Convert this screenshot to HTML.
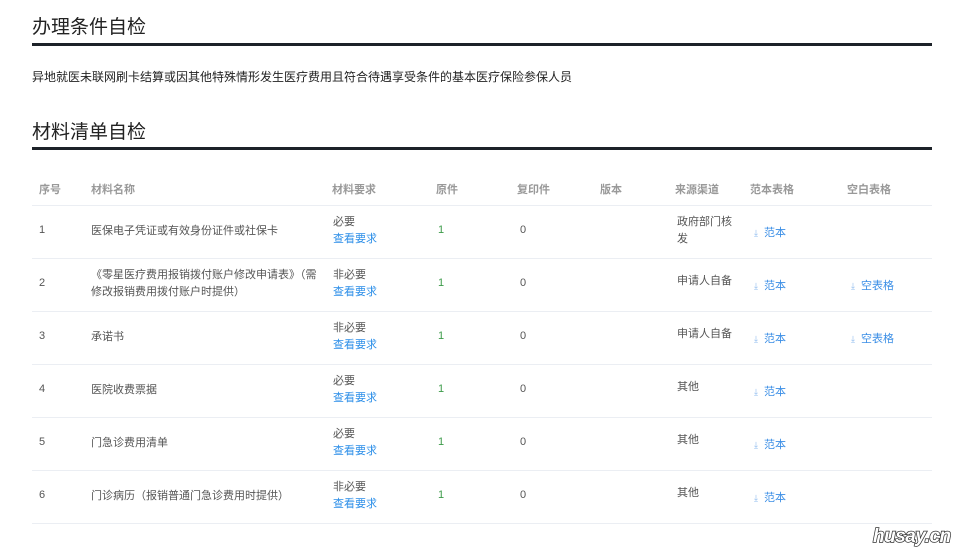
<!DOCTYPE html>
<html><head><meta charset="utf-8"><style>
body{margin:0;width:966px;height:554px;background:#fff;font-family:"Liberation Sans","Noto Sans CJK SC",sans-serif;position:relative;overflow:hidden;color:#333}
.a{position:absolute;white-space:nowrap}
.h{font-size:19px;color:#222}
.bar{position:absolute;left:32px;width:900px;height:3px;background:#1d2229}
.th{font-size:11px;color:#999;font-weight:bold}
.row{position:absolute;left:32px;width:900px;height:1px;background:#ebeef3}
.t{font-size:11px;color:#555}
.b{color:#2b8ee8}
.g{color:#3d9b4a}
.d{font-size:11px;color:#3a8ee6}
.d i{font-style:normal;font-size:9px;color:#8ab8ee;margin-right:6px}
</style></head><body>
<div class="a h" style="left:32px;top:12px">办理条件自检</div>
<div class="bar" style="top:43px"></div>
<div class="a" style="left:32px;top:68px;font-size:12px;color:#222">异地就医未联网刷卡结算或因其他特殊情形发生医疗费用且符合待遇享受条件的基本医疗保险参保人员</div>
<div class="a h" style="left:32px;top:117px">材料清单自检</div>
<div class="bar" style="top:147px"></div>
<div class="a th" style="left:39px;top:181px">序号</div>
<div class="a th" style="left:91px;top:181px">材料名称</div>
<div class="a th" style="left:332px;top:181px">材料要求</div>
<div class="a th" style="left:436px;top:181px">原件</div>
<div class="a th" style="left:517px;top:181px">复印件</div>
<div class="a th" style="left:600px;top:181px">版本</div>
<div class="a th" style="left:675px;top:181px">来源渠道</div>
<div class="a th" style="left:750px;top:181px">范本表格</div>
<div class="a th" style="left:847px;top:181px">空白表格</div>
<div class="row" style="top:205px"></div>

<div id="rows"></div>
<script>
var R=[["1","医保电子凭证或有效身份证件或社保卡","必要","政府部门核<br>发",0],
["2","《零星医疗费用报销拨付账户修改申请表》（需<br>修改报销费用拨付账户时提供）","非必要","申请人自备",1],
["3","承诺书","非必要","申请人自备",1],
["4","医院收费票据","必要","其他",0],
["5","门急诊费用清单","必要","其他",0],
["6","门诊病历（报销普通门急诊费用时提供）","非必要","其他",0]];
var h="";
R.forEach(function(r,i){var y=205+i*53;var m=y+26;
h+='<div class="a t" style="left:39px;top:'+(m-7)+'px">'+r[0]+'</div>';
var two=r[1].indexOf("<br>")>0;
h+='<div class="a t" style="left:91px;line-height:17px;top:'+(two?m-17:m-8)+'px">'+r[1]+'</div>';
h+='<div class="a t" style="left:333px;line-height:17px;top:'+(m-17)+'px">'+r[2]+'<br><span class="b">查看要求</span></div>';
h+='<div class="a t g" style="left:438px;top:'+(m-7)+'px;color:#3d9b4a">1</div>';
h+='<div class="a t" style="left:520px;top:'+(m-7)+'px">0</div>';
var s2=r[3].indexOf("<br>")>0;
h+='<div class="a t" style="left:677px;line-height:17px;top:'+(s2?m-17:m-11)+'px">'+r[3]+'</div>';
h+='<div class="a d" style="left:754px;top:'+(m-7)+'px"><i>⤓</i>范本</div>';
if(r[4])h+='<div class="a d" style="left:851px;top:'+(m-7)+'px"><i>⤓</i>空表格</div>';
h+='<div class="row" style="top:'+(y+53)+'px"></div>';});
document.getElementById("rows").innerHTML=h;
</script>
<div class="a" style="left:873px;top:526px;font-size:19px;font-weight:bold;font-style:italic;color:#fff;-webkit-text-stroke:1.5px #333;paint-order:stroke fill;letter-spacing:-0.5px">husay.cn</div>
</body></html>
